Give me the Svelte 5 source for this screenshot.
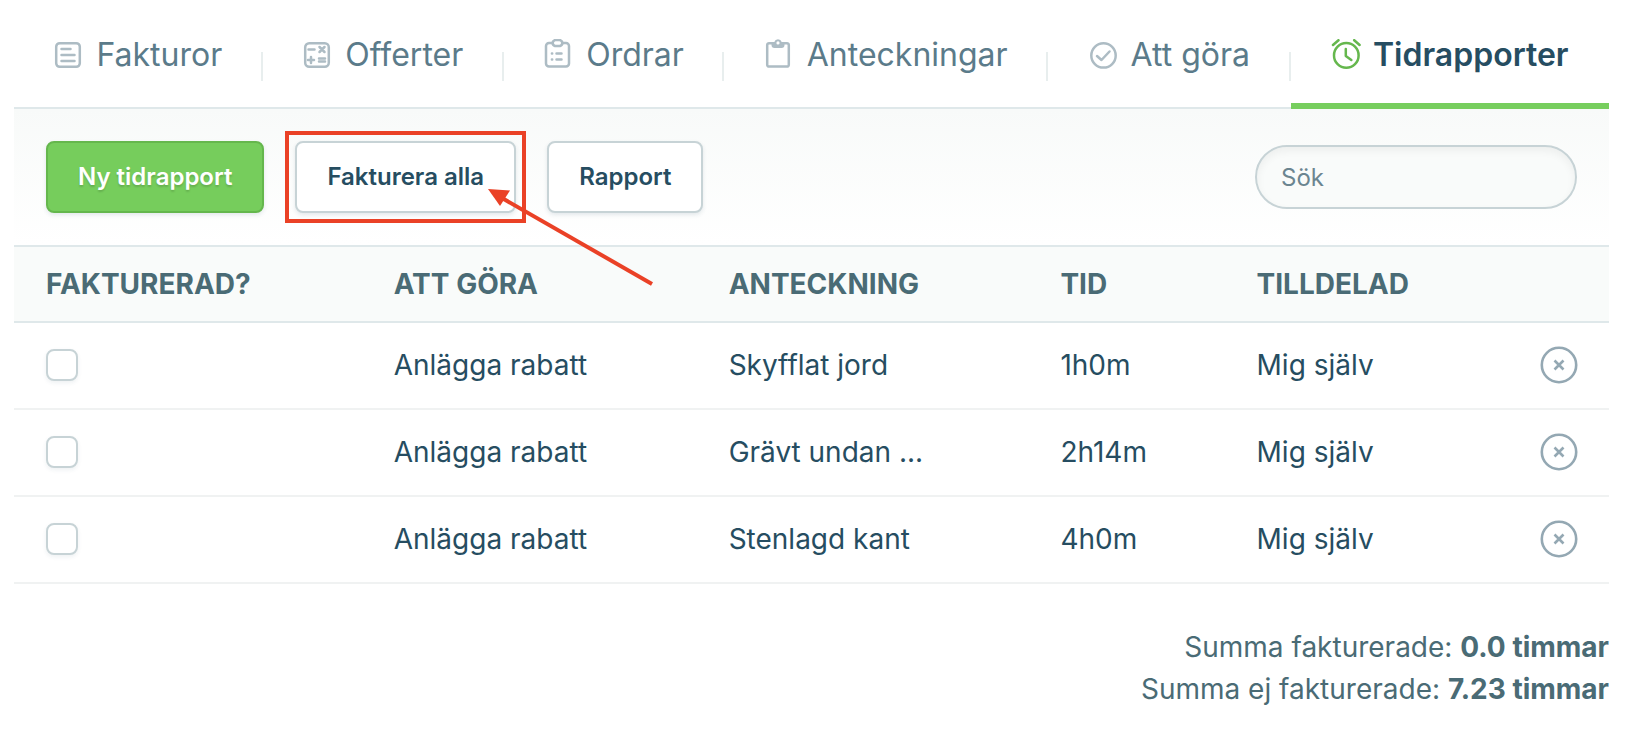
<script lang="ts">
	type Tab = { id: string; label: string };
	type Report = { id: number; todo: string; note: string; time: string; assignee: string; invoiced: boolean };

	const tabs: Tab[] = [
		{ id: 'invoices', label: 'Fakturor' },
		{ id: 'quotes', label: 'Offerter' },
		{ id: 'orders', label: 'Ordrar' },
		{ id: 'notes', label: 'Anteckningar' },
		{ id: 'todo', label: 'Att göra' },
		{ id: 'time', label: 'Tidrapporter' },
	];

	let active = $state('time');
	let search = $state('');
	let reports: Report[] = $state([
		{ id: 1, todo: 'Anlägga rabatt', note: 'Skyfflat jord', time: '1h0m', assignee: 'Mig själv', invoiced: false },
		{ id: 2, todo: 'Anlägga rabatt', note: 'Grävt undan ...', time: '2h14m', assignee: 'Mig själv', invoiced: false },
		{ id: 3, todo: 'Anlägga rabatt', note: 'Stenlagd kant', time: '4h0m', assignee: 'Mig själv', invoiced: false },
	]);

	function remove(id: number) {
		reports = reports.filter(r => r.id !== id);
	}
</script>

<svelte:head>
	<title>Tidrapporter</title>
</svelte:head>

<main>
	<nav>
		{#each tabs as tab}
			<a href="#{tab.id}" class:active={tab.id === active} onclick={() => (active = tab.id)}>
				<svg class="icon" viewBox="0 1 30 32" aria-hidden="true">
					{#if tab.id === 'invoices'}
						<rect x="2.2" y="5.2" width="23.6" height="23.6" rx="3.5" />
						<path d="M7.5 11h9M7.5 17h13M7.5 23h13" />
					{:else if tab.id === 'quotes'}
						<rect x="2.2" y="5.2" width="23.6" height="23.6" rx="4" />
						<path d="M5.5 11.5h6M16.5 9l5 5M21.5 9l-5 5M5 22h6M8 19v6M16 20.4h6M16 23.6h6" />
					{:else if tab.id === 'orders'}
						<path d="M9 5H5a3 3 0 0 0-3 3v17.5a3 3 0 0 0 3 3h17a3 3 0 0 0 3-3V8a3 3 0 0 0-3-3h-4" />
						<path d="M11 2h5q2.5 1 2.5 3T16 8h-5Q8.5 7 8.5 5T11 2z" />
						<path d="M7.9 15.5h.3M7.9 21.5h.3M12.5 15.5h5M12.5 21.5h5" />
					{:else if tab.id === 'notes'}
						<path d="M8 5.200H4a1.800 1.800 0 0 0-1.800 1.800v19.800a1.800 1.800 0 0 0 1.800 1.800h18a1.800 1.800 0 0 0 1.800-1.800V7a1.800 1.800 0 0 0-1.800-1.800h-4" />
						<path class="solid" fill-rule="evenodd" d="M6.5 4H9.300a3.900 3.900 0 0 1 7.400 0h2.800v3a3 3 0 0 1-3 3h-7a3 3 0 0 1-3-3zM13 3.300a1.600 1.600 0 1 0 0 3.200A1.600 1.600 0 0 0 13 3.300z" />
					{:else if tab.id === 'todo'}
						<circle cx="14.5" cy="17.4" r="12.2" />
						<path d="M8 18l4.5 4L20.5 13.5" />
					{:else}
						<circle cx="15.3" cy="17.4" r="12.3" />
						<path d="M14.8 11v7l5.5 4M2 7l5.5-4.8M23.2 2.2L28.6 7" />
					{/if}
				</svg>
				{tab.label}
			</a>
		{/each}
	</nav>

	<div class="toolbar">
		<div class="buttons">
			<button class="btn primary">Ny tidrapport</button>
			<div class="highlight">
				<button class="btn">Fakturera alla</button>
				<span class="frame"></span>
				<svg class="arrow" viewBox="0 0 168 98" aria-hidden="true">
					<path class="shaft" d="M15 10L165 96" />
					<path class="head" d="M1 1l22 1.5L13 18z" />
				</svg>
			</div>
			<button class="btn">Rapport</button>
		</div>
		<input class="search" type="search" placeholder="Sök" aria-label="Sök" bind:value={search} />
	</div>

	<table>
		<thead>
			<tr>
				<th>Fakturerad?</th>
				<th>Att göra</th>
				<th>Anteckning</th>
				<th>Tid</th>
				<th>Tilldelad</th>
				<th></th>
			</tr>
		</thead>
		<tbody>
			{#each reports as report (report.id)}
				<tr>
					<td><input type="checkbox" aria-label="Fakturerad" bind:checked={report.invoiced} /></td>
					<td>{report.todo}</td>
					<td>{report.note}</td>
					<td>{report.time}</td>
					<td>{report.assignee}</td>
					<td>
						<button class="remove" aria-label="Ta bort" onclick={() => remove(report.id)}>
							<svg viewBox="0 0 38 38" aria-hidden="true">
								<circle cx="19" cy="19" r="17.2" />
								<path d="M14.5 14.5l9 9M23.5 14.5l-9 9" />
							</svg>
						</button>
					</td>
				</tr>
			{/each}
		</tbody>
	</table>

	<div class="totals">
		<p>Summa fakturerade: <strong>0.0 timmar</strong></p>
		<p>Summa ej fakturerade: <strong>7.23 timmar</strong></p>
	</div>
</main>

<style>
	:global(body) {
		background: #fff;
	}

	main {
		margin: 0 27px 0 14px;
		font-family: Inter, sans-serif;
		font-size: 28px;
		color: #264d61;
	}

	nav {
		display: flex;
		border-bottom: 2px solid #dfe8ea;
	}

	nav a {
		flex: 1 1 auto;
		display: flex;
		align-items: center;
		justify-content: center;
		gap: 12px;
		margin-bottom: -2px;
		padding: 35px 0 28px;
		border-bottom: 6px solid transparent;
		/* short divider, drawn as a background so it stays clear of the text */
		background: linear-gradient(#e8eeee, #e8eeee) right 52px / 2px 29px no-repeat;
		font-size: 32px;
		line-height: 40px;
		color: #5b7b8a;
		text-decoration: none;
		white-space: nowrap;
	}

	nav a:last-child {
		background: none;
	}

	nav a.active {
		border-color: #77ce5e;
		font-weight: 600;
		color: #264d61;
	}

	.icon {
		width: 30px;
		height: 32px;
		fill: none;
		stroke: #adbcc4;
		stroke-width: 2.5;
		stroke-linecap: round;
		stroke-linejoin: round;
	}

	.icon .solid {
		fill: #adbcc4;
		stroke: none;
	}

	.active .icon {
		stroke: #65b74d;
	}

	.toolbar {
		display: flex;
		align-items: center;
		justify-content: space-between;
		padding: 32px;
		background: linear-gradient(#f8faf9, #fff);
	}

	.buttons {
		display: flex;
		gap: 31px;
	}

	.btn {
		height: 72px;
		padding: 0 30px;
		border: 2px solid #c7d3d6;
		border-radius: 8px;
		background: #fff;
		box-shadow: 0 2px 4px rgba(38, 77, 97, 0.12);
		font: 600 24px/32px Inter, sans-serif;
		color: #264d61;
		cursor: pointer;
	}

	.primary {
		border-color: #65b74d;
		background: #76cd5c;
		color: #fff;
		text-shadow: 0 2px 2px rgba(0, 0, 0, 0.15);
	}

	.highlight {
		position: relative;
	}

	.frame {
		position: absolute;
		inset: -10px;
		border: 4px solid #ea4126;
		pointer-events: none;
	}

	.arrow {
		position: absolute;
		top: 47px;
		left: calc(100% - 29px);
		z-index: 1;
		width: 168px;
		height: 98px;
		pointer-events: none;
	}

	.shaft {
		stroke: #ea4126;
		stroke-width: 4;
	}

	.head {
		fill: #ea4126;
	}

	.search {
		box-sizing: border-box;
		width: 322px;
		height: 64px;
		padding: 0 24px;
		border: 2px solid #c7d3d6;
		border-radius: 32px;
		outline: none;
		appearance: none;
		background: #f9fbfa;
		box-shadow: inset 0 4px 8px rgba(0, 0, 0, 0.05);
		font: 24px/32px Inter, sans-serif;
		color: #264d61;
	}

	.search::placeholder {
		color: #6b8590;
	}

	table {
		width: 100%;
		table-layout: fixed;
		border-collapse: separate;
		border-spacing: 0;
	}

	th,
	td {
		box-sizing: border-box;
		padding: 0 0 0 32px;
		white-space: nowrap;
	}

	th {
		height: 78px;
		border: solid #dfe8ea;
		border-width: 2px 0;
		background: #f9fbfa;
		font-weight: 700;
		text-align: left;
		text-transform: uppercase;
		color: #4a6b75;
	}

	th:nth-child(1) {
		width: 21.8%;
	}

	th:nth-child(2) {
		width: 21%;
	}

	th:nth-child(3) {
		width: 20.8%;
	}

	th:nth-child(4) {
		width: 12.3%;
	}

	th:nth-child(5) {
		width: 14%;
	}

	td {
		height: 87px;
		padding-bottom: 2px;
		border-bottom: 2px solid #f0f2f2;
	}

	input[type='checkbox'] {
		display: block;
		width: 32px;
		height: 32px;
		margin: 0;
		border: 2px solid #c7d3d6;
		border-radius: 8px;
		appearance: none;
		background: #fff;
		box-shadow: 0 2px 4px rgba(38, 77, 97, 0.08);
	}

	input[type='checkbox']:checked {
		border-color: #65b74d;
		background: #76cd5c;
	}

	.remove {
		display: block;
		margin: 0 31px 0 auto;
		padding: 0;
		border: 0;
		background: none;
		cursor: pointer;
	}

	.remove svg {
		display: block;
		width: 38px;
		height: 38px;
		fill: none;
		stroke: #94a8b3;
		stroke-width: 2.6;
	}

	.totals {
		margin-top: 42px;
		line-height: 42px;
		text-align: right;
		color: #4a6b75;
	}

	.totals p {
		margin: 0;
	}
</style>
